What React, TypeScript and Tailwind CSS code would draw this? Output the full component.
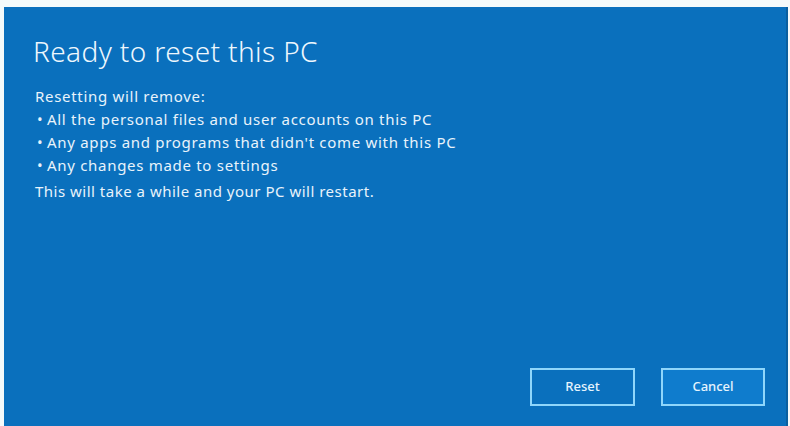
export default function App() {
  const items = [
    'All the personal files and user accounts on this PC',
    "Any apps and programs that didn't come with this PC",
    'Any changes made to settings',
  ]

  return (
    <div className="w-[790px] h-[426px] bg-[#f4fafb] pt-[7px] pl-[4px] overflow-hidden font-['Noto_Sans',sans-serif]">
      <div className="w-[784px] h-[419px] bg-[#0a70bd] border-r-2 border-[#0a5f9f] flex flex-col text-white">
        <div className="flex-1 pl-[29px] pt-[26px]">
          <h1 className="text-[28px] font-light leading-[36px] tracking-[0.4px] text-[#eef7fd]">Ready to reset this PC</h1>
          <div className="mt-[16px] text-[15px] leading-[23px] tracking-[0.7px] text-[#e8f3fb]">
            <p className="pl-[2px]">Resetting will remove:</p>
            <ul>
              {items.map(t => (
                <li key={t} className="flex">
                  <span className="w-[14px] pl-[4px]">•</span>
                  <span>{t}</span>
                </li>
              ))}
            </ul>
            <p className="pl-[2px] mt-[3px] tracking-[0.5px]">This will take a while and your PC will restart.</p>
          </div>
        </div>
        <div className="flex justify-end gap-[26px] pr-[21px] pb-[20px]">
          <button className="w-[105px] h-[38px] border-2 border-[#8fd6fb] bg-[#0a70bd] text-[13px] font-medium text-[#e6f4fd]">
            Reset
          </button>
          <button className="w-[104px] h-[38px] border-2 border-[#8fd6fb] bg-[#0f7ccd] text-[13px] font-medium text-[#e6f4fd]">
            Cancel
          </button>
        </div>
      </div>
    </div>
  )
}
